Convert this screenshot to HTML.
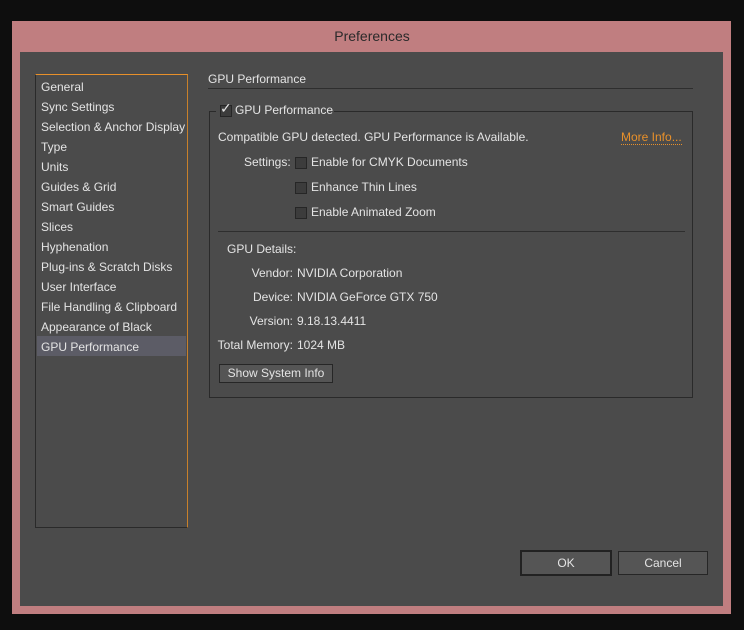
<!DOCTYPE html><html><head><style>
*{margin:0;padding:0;box-sizing:border-box}
body{width:744px;height:630px;background:#0e0e0e;position:relative;overflow:hidden;font-family:"Liberation Sans",sans-serif;font-size:12px;color:#e4e4e4;letter-spacing:0}
.a{position:absolute;white-space:nowrap}
.cb{position:absolute;width:12px;height:12px;border:1px solid #262626;background:#3c3c3c}
.btn{position:absolute;background:#555;border:1px solid #262626;text-align:center;color:#e4e4e4}
</style></head><body>
<div class="a" style="left:12px;top:21px;width:719px;height:593px;background:#c07e80"></div>
<div class="a" style="left:0;top:28px;width:744px;text-align:center;font-size:14px;color:#2a2a2a">Preferences</div>
<div class="a" style="left:20px;top:52px;width:703px;height:554px;background:#4b4b4b"></div>
<div class="a" style="left:35px;top:74px;width:153px;height:454px;border:1px solid #2a2a2a;border-top-color:#e8902a;border-right-color:#c8802a;background:#4b4b4b"></div>
<div class="a" style="left:37px;top:336px;width:149px;height:20px;background:#5c5c66"></div>
<div class="a" style="left:41px;top:77px;line-height:20px">General<br>Sync Settings<br>Selection &amp; Anchor Display<br>Type<br>Units<br>Guides &amp; Grid<br>Smart Guides<br>Slices<br>Hyphenation<br>Plug-ins &amp; Scratch Disks<br>User Interface<br>File Handling &amp; Clipboard<br>Appearance of Black<br>GPU Performance</div>
<div class="a" style="left:208px;top:72px">GPU Performance</div>
<div class="a" style="left:208px;top:88px;width:485px;height:1px;background:#2e2e2e"></div>
<div class="a" style="left:209px;top:111px;width:484px;height:287px;border:1px solid #2a2a2a"></div>
<div class="a" style="left:216px;top:104px;width:118px;height:14px;background:#4b4b4b"></div>
<div class="cb" style="left:220px;top:105px"></div>
<div class="a" style="left:220px;top:100px;font-size:14px;color:#e4e4e4">✓</div>
<div class="a" style="left:235px;top:103px">GPU Performance</div>
<div class="a" style="left:218px;top:130px">Compatible GPU detected. GPU Performance is Available.</div>
<div class="a" style="left:621px;top:130px;color:#e8902a;border-bottom:1px dotted #e8902a;line-height:14px">More Info...</div>
<div class="a" style="left:244px;top:155px">Settings:</div>
<div class="cb" style="left:295px;top:157px"></div><div class="a" style="left:311px;top:155px">Enable for CMYK Documents</div>
<div class="cb" style="left:295px;top:182px"></div><div class="a" style="left:311px;top:180px">Enhance Thin Lines</div>
<div class="cb" style="left:295px;top:207px"></div><div class="a" style="left:311px;top:205px">Enable Animated Zoom</div>
<div class="a" style="left:218px;top:231px;width:467px;height:1px;background:#2e2e2e"></div>
<div class="a" style="left:227px;top:242px">GPU Details:</div>
<div class="a" style="left:200px;width:93px;top:266px;text-align:right">Vendor:</div><div class="a" style="left:297px;top:266px">NVIDIA Corporation</div>
<div class="a" style="left:200px;width:93px;top:290px;text-align:right">Device:</div><div class="a" style="left:297px;top:290px">NVIDIA GeForce GTX 750</div>
<div class="a" style="left:200px;width:93px;top:314px;text-align:right">Version:</div><div class="a" style="left:297px;top:314px">9.18.13.4411</div>
<div class="a" style="left:200px;width:93px;top:338px;text-align:right">Total Memory:</div><div class="a" style="left:297px;top:338px">1024 MB</div>
<div class="btn" style="left:219px;top:364px;width:114px;height:19px;line-height:17px">Show System Info</div>
<div class="btn" style="left:520px;top:550px;width:92px;height:26px;line-height:22px;border:2px solid #222">OK</div>
<div class="btn" style="left:618px;top:551px;width:90px;height:24px;line-height:22px">Cancel</div>
</body></html>
